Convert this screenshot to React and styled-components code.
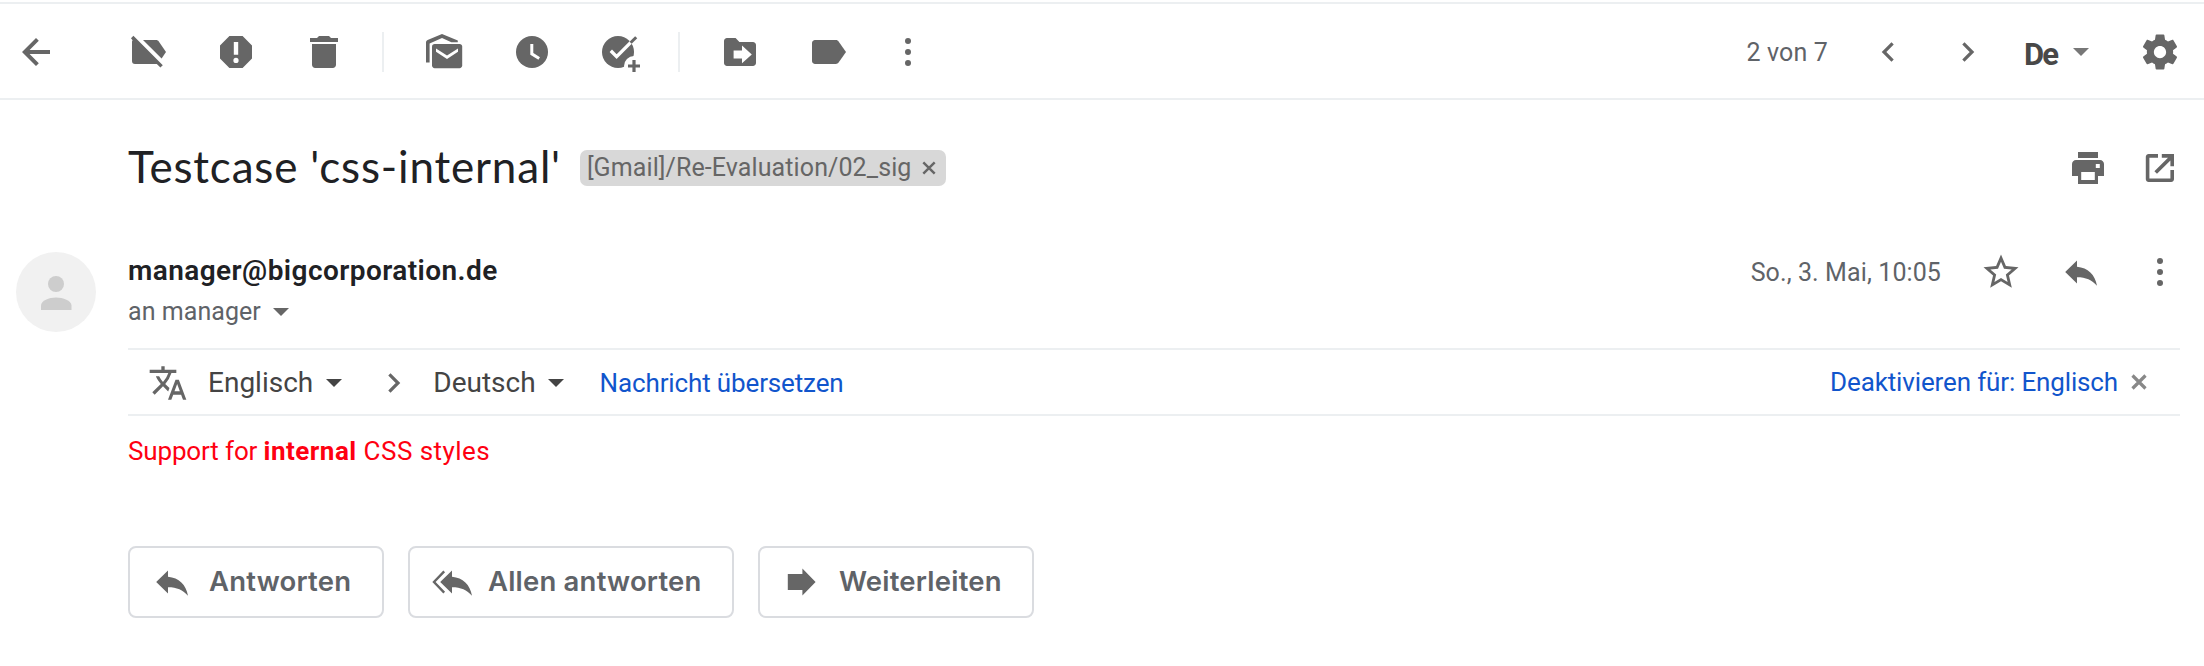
import React from "react";
import styled, { createGlobalStyle } from "styled-components";

const GlobalStyle = createGlobalStyle`
  * { box-sizing: border-box; }
  body {
    margin: 0;
    background: #fff;
    color: #202124;
    font-family: Roboto, "Liberation Sans", sans-serif;
  }
`;

const ICON = "#666";
const LINE = "#eceff1";

/* ---------- icons ---------- */

const Svg = styled.svg`
  display: block;
  flex: none;
  overflow: visible;
  width: ${(p) => p.$w || 40}px;
  height: ${(p) => p.$h || 40}px;
  fill: ${(p) => p.$color || ICON};
`;

const Icon = ({ children, box = "0 0 20 20", ...rest }) => (
  <Svg viewBox={box} aria-hidden="true" {...rest}>
    {children}
  </Svg>
);

const BackIcon = () => (
  <Icon><path d="M17 9H6.8l4.6-4.6L10 3l-7 7 7 7 1.4-1.4L6.8 11H17z" /></Icon>
);
const LabelOffIcon = () => (
  <Icon>
    <path d="M2.7 1.9 1.5 3.1l.8 1Q2 4.4 2 5v9.5A1.5 1.5 0 0 0 3.5 16h10.9l1.8 1.8 1.2-1.2z" />
    <path d="M7.5 4H14c.6 0 1.1.3 1.4.7L19 10l-2.2 3.3z" />
  </Icon>
);
const SpamIcon = () => (
  <Icon>
    <path fillRule="evenodd" d="M13.3 2H6.7L2 6.7v6.6L6.7 18h6.6l4.7-4.7V6.7zM8.9 5h2.2v6.4H8.9zM10 12.9a1.3 1.3 0 1 1 0 2.6 1.3 1.3 0 0 1 0-2.6z" />
  </Icon>
);
const TrashIcon = () => (
  <Icon>
    <path d="M13.5 3l-1-1h-5l-1 1H3v2h14V3zM4 6v10.4C4 17.3 4.7 18 5.6 18h8.8c.9 0 1.6-.7 1.6-1.6V6z" />
  </Icon>
);
const UnreadIcon = () => (
  <Icon>
    <path d="M1 15.200V5.300c0-.6.3-1.100.8-1.300L9 1l7.900 3.300v.8h-3.200L9 3 2.800 5.700V15.200z" />
    <path d="M5.300 6h12.500c.7 0 1.300.6 1.300 1.300v9.500c0 .7-.6 1.300-1.300 1.300H5.300c-.7 0-1.300-.6-1.300-1.300V7.300C4 6.600 4.600 6 5.300 6z" />
    <path d="M6 8.600v1.300l5.500 3.600L17 9.900V8.300l-5.500 3.400L6 8.300z" fill="#fff" />
  </Icon>
);
const SnoozeIcon = () => (
  <Icon>
    <circle cx="10" cy="10" r="8" />
    <path d="M9.900 6v4.900l3.700 2.300" fill="none" stroke="#fff" strokeWidth="1.500" />
  </Icon>
);
const AddTaskIcon = () => (
  <Icon>
    <circle cx="9" cy="10" r="8" />
    <circle cx="17" cy="17" r="5" fill="#fff" />
    <path d="M5.400 9.400l2.900 2.900 8.600-8.600" fill="none" stroke="#fff" strokeWidth="1.700" />
    <path d="M15.300 5.400l2.800-2.800" fill="none" stroke={ICON} strokeWidth="1.500" />
    <path d="M16.200 14h1.600v2.200H20v1.600h-2.200V20h-1.600v-2.200H14v-1.600h2.200z" />
  </Icon>
);
const MoveIcon = () => (
  <Icon>
    <path d="M3.500 3h4.300l1.900 2h6.800c.8 0 1.500.7 1.500 1.500v9c0 .8-.7 1.500-1.500 1.500h-13C2.700 17 2 16.300 2 15.500v-11C2 3.700 2.700 3 3.500 3z" />
    <path d="M6.800 9.200h4.200V6.800l4.900 4.400-4.900 4.400v-2.400H6.800z" fill="#fff" />
  </Icon>
);
const LabelIcon = () => (
  <Icon><path d="M3.500 4h10.400c.6 0 1.100.3 1.400.7L19 10l-3.700 5.300c-.3.4-.8.7-1.400.7H3.500C2.700 16 2 15.300 2 14.500v-9C2 4.700 2.700 4 3.500 4z" /></Icon>
);
const MoreIcon = () => (
  <Icon>
    <circle cx="10" cy="4.500" r="1.500" /><circle cx="10" cy="10" r="1.500" /><circle cx="10" cy="15.500" r="1.500" />
  </Icon>
);
const ChevronIcon = ({ left }) => (
  <Icon>
    <path d={left ? "M12.300 5.700 8 10l4.300 4.300" : "M7.700 5.700 12 10l-4.300 4.300"} fill="none" stroke={ICON} strokeWidth="1.600" />
  </Icon>
);
const GearIcon = () => (
  <Icon box="0 0 24 24" $w={42} $h={42}>
    <path d="M19.430 12.980c.04-.32.07-.64.07-.98s-.03-.66-.07-.98l2.110-1.650c.19-.15.24-.42.12-.64l-2-3.460c-.12-.22-.39-.3-.61-.22l-2.490 1c-.52-.4-1.080-.73-1.690-.98l-.38-2.650C14.460 2.180 14.250 2 14 2h-4c-.25 0-.46.18-.49.42l-.38 2.650c-.61.25-1.170.59-1.690.98l-2.490-1c-.23-.09-.49 0-.61.22l-2 3.460c-.13.22-.07.49.12.64l2.110 1.650c-.04.32-.07.65-.07.98s.03.66.07.98l-2.110 1.650c-.19.15-.24.42-.12.64l2 3.460c.12.22.39.3.61.22l2.490-1c.52.4 1.080.73 1.690.98l.38 2.650c.03.24.24.42.49.42h4c.25 0 .46-.18.49-.42l.38-2.650c.61-.25 1.170-.59 1.690-.98l2.490 1c.23.09.49 0 .61-.22l2-3.460c.12-.22.07-.49-.12-.64l-2.110-1.650zM12 15.500c-1.930 0-3.500-1.570-3.500-3.500s1.570-3.500 3.500-3.500 3.500 1.570 3.500 3.500-1.570 3.500-3.500 3.500z" />
  </Icon>
);
const PrintIcon = () => (
  <Icon>
    <path fillRule="evenodd" d="M5 2h10v3H5zM4 6h12c1.100 0 2 .9 2 2v6h-3v4H5v-4H2V8c0-1.100.9-2 2-2zm2.600 6v4h6.800v-4zM13.900 8v2h2V8z" />
  </Icon>
);
const PopOutIcon = () => (
  <Icon>
    <path d="M9 3v1.900H4.700v10.400h10.500V11H17v4.600c0 .8-.7 1.400-1.400 1.400H4.300c-.7 0-1.400-.6-1.400-1.400V4.400C2.900 3.600 3.600 3 4.300 3z" />
    <path d="M10.900 3H17v6.100h-1.800V6.200l-6.700 6.700-1.300-1.300 6.800-6.700h-3.100z" />
  </Icon>
);
const StarIcon = () => (
  <Icon box="0 0 24 24" $w={42} $h={42}>
    <path d="M22 9.240l-7.190-.62L12 2 9.190 8.630 2 9.240l5.460 4.730L5.820 21 12 17.270 18.180 21l-1.630-7.030L22 9.240zM12 15.400l-3.760 2.270 1-4.280-3.320-2.880 4.380-.38L12 6.100l1.710 4.040 4.380.38-3.320 2.880 1 4.280L12 15.400z" />
  </Icon>
);
const REPLY = "M8 4.200v3.200c5.500.5 9 3.900 10 9.500-2.600-3-5.500-4.300-10-4.300v3.200L2.100 10z";
const ReplyIcon = () => <Icon><path d={REPLY} /></Icon>;
const ReplyAllIcon = () => (
  <Icon box="-2 0 22 20" $w={44}>
    <path d={REPLY} />
    <path d="M4.100 4.700-1 10l5.100 5.300" fill="none" stroke={ICON} strokeWidth="1.200" />
  </Icon>
);
const ForwardIcon = () => (
  <Icon><path d="M2.900 6h7.300V3.200l6.600 6.800-6.600 6.800V14H2.900z" /></Icon>
);
const TranslateIcon = () => (
  <Icon box="0 0 24 24">
    <path d="M12.870 15.070l-2.540-2.510.03-.03A17.520 17.520 0 0 0 14.070 6H17V4h-7V2H8v2H1v2h11.170C11.500 7.920 10.440 9.750 9 11.350 8.070 10.320 7.300 9.190 6.690 8h-2c.73 1.630 1.730 3.170 2.980 4.560l-5.090 5.020L4 19l5-5 3.110 3.110.76-2.040zM18.500 10h-2L12 22h2l1.120-3h4.750L21 22h2l-4.500-12zm-2.620 7l1.620-4.330L19.120 17h-3.240z" />
  </Icon>
);
const Cross = ({ size, weight, color }) => (
  <Icon box="0 0 16 16" $w={size} $h={size}>
    <path d="M1.500 1.500l13 13M14.500 1.500l-13 13" fill="none" stroke={color} strokeWidth={weight} />
  </Icon>
);
const PersonIcon = () => (
  <Icon box="0 0 80 80" $w={80} $h={80} $color="#cdcdcd">
    <circle cx="40" cy="32" r="8" />
    <path d="M25 58v-4.500C25 48.500 33 45.500 40 45.500s15.500 3 15.500 8V58z" />
  </Icon>
);

const Caret = styled.span`
  flex: none;
  border: solid transparent;
  border-width: 8px 8px 0;
  border-top-color: ${(p) => p.$color || ICON};
`;

/* ---------- layout ---------- */

const Page = styled.main`
  width: 2204px;
  height: 666px;
  padding-top: 2px;
  overflow: hidden;
`;

const Toolbar = styled.header`
  display: flex;
  align-items: center;
  justify-content: space-between;
  height: 98px;
  padding: 2px 23px 0 16px;
  border-top: 2px solid ${LINE};
  border-bottom: 2px solid ${LINE};
`;

const ToolGroup = styled.div`
  display: flex;
  align-items: center;
`;

const ToolButton = styled.span`
  display: flex;
  align-items: center;
  justify-content: center;
  width: ${(p) => p.$width || 88}px;
  height: 40px;
  margin-left: ${(p) => p.$lead || 0}px;
`;

const Divider = styled.span`
  width: 2px;
  height: 40px;
  margin: 0 16px 0 14px;
  background: ${LINE};
`;

const Counter = styled.span`
  margin-right: 20px;
  font-size: 25px;
  letter-spacing: 0.15px;
  color: #5f6368;
`;

const InputTool = styled.span`
  display: flex;
  align-items: center;
  gap: 16px;
  width: 131px;
  padding-left: 16px;
`;

const InputToolName = styled.span`
  padding-top: 6px;
  font-size: 31px;
  line-height: 36px;
  font-weight: 700;
  letter-spacing: -2px;
  color: #484848;
`;

const SubjectRow = styled.section`
  display: flex;
  align-items: center;
  height: 136px;
  padding: 0 24px 0 128px;
`;

const Subject = styled.h1`
  margin: 0 19px 4px 0;
  font: 400 44px/52px Lato, "Open Sans", sans-serif;
  letter-spacing: 0.82px;
  white-space: nowrap;
`;

const LabelChip = styled.span`
  display: flex;
  align-items: center;
  gap: 11px;
  height: 36px;
  padding: 0 10px 0 7px;
  border-radius: 7px;
  background: #d8d8d8;
  color: #666;
  font-size: 25px;
  line-height: 34px;
  letter-spacing: 0.1px;
`;

const TrailingIcons = styled.div`
  display: flex;
  gap: 32px;
  margin-left: auto;
`;

const SenderRow = styled.section`
  display: flex;
  height: 112px;
  padding: 16px 24px 0 16px;
`;

const Avatar = styled.div`
  width: 80px;
  height: 80px;
  margin-right: 32px;
  border-radius: 50%;
  background: #f1f1f1;
`;

const SenderAddress = styled.div`
  padding-top: 1px;
  font-size: 28px;
  line-height: 36px;
  font-weight: 600;
  letter-spacing: 0.43px;
`;

const Recipient = styled.div`
  display: flex;
  align-items: center;
  gap: 12px;
  margin-top: 7px;
  font-size: 25px;
  line-height: 32px;
  letter-spacing: 0.05px;
  color: #5f6368;
`;

const SenderActions = styled.div`
  display: flex;
  align-items: center;
  height: 40px;
  margin-left: auto;
  gap: 39px;
`;

const DateText = styled.span`
  font-size: 25px;
  letter-spacing: 0.1px;
  color: #5f6368;
`;

const Body = styled.section`
  width: 2052px;
  margin-left: 128px;
`;

const TranslateBar = styled.div`
  display: flex;
  align-items: center;
  height: 68px;
  padding: 2px 33px 0 20px;
  border-top: 2px solid ${LINE};
  border-bottom: 2px solid ${LINE};
`;

const Language = styled.span`
  display: flex;
  align-items: center;
  gap: ${(p) => p.$gap}px;
  margin-left: ${(p) => p.$lead}px;
  font-size: 28px;
  line-height: 36px;
  color: #444;
`;

const Link = styled.a`
  font-size: 26px;
  line-height: 32px;
  letter-spacing: -0.14px;
  color: #15c;
  white-space: nowrap;
`;

const TranslateLink = styled(Link)`
  margin-left: 36px;
`;

const DisableGroup = styled.span`
  display: flex;
  align-items: center;
  gap: 13px;
  margin-left: auto;
  padding-bottom: 2px;
`;

const Message = styled.p`
  margin: 19px 0 0;
  font-size: 26px;
  line-height: 32px;
  letter-spacing: -0.15px;
  color: #f01;
  white-space: pre;

  b { letter-spacing: 0.5px; }
  b + span { letter-spacing: 0.45px; }
`;

const ReplyBar = styled.div`
  display: flex;
  gap: 24px;
  margin-top: 79px;
`;

const ReplyButton = styled.button`
  display: flex;
  align-items: center;
  gap: ${(p) => p.$gap}px;
  width: ${(p) => p.$width}px;
  height: 72px;
  padding: 0 0 0 22px;
  border: 2px solid #dadce0;
  border-radius: 8px;
  background: #fff;
  color: #5f6368;
  font: 600 27.500px/34px Inter, "Open Sans", sans-serif;
  letter-spacing: 0.2px;
  white-space: nowrap;

  span { padding-bottom: 3px; }
`;

export default function App() {
  return (
    <Page>
      <GlobalStyle />
      <Toolbar>
        <ToolGroup>
          <ToolButton $width={40}><BackIcon /></ToolButton>
          <ToolButton $lead={48}><LabelOffIcon /></ToolButton>
          <ToolButton><SpamIcon /></ToolButton>
          <ToolButton><TrashIcon /></ToolButton>
          <Divider />
          <ToolButton><UnreadIcon /></ToolButton>
          <ToolButton><SnoozeIcon /></ToolButton>
          <ToolButton><AddTaskIcon /></ToolButton>
          <Divider />
          <ToolButton><MoveIcon /></ToolButton>
          <ToolButton><LabelIcon /></ToolButton>
          <ToolButton $width={72}><MoreIcon /></ToolButton>
        </ToolGroup>
        <ToolGroup>
          <Counter>2 von 7</Counter>
          <ToolButton $width={80}><ChevronIcon left /></ToolButton>
          <ToolButton $width={80}><ChevronIcon /></ToolButton>
          <InputTool>
            <InputToolName>De</InputToolName>
            <Caret $color="#777" />
          </InputTool>
          <GearIcon />
        </ToolGroup>
      </Toolbar>

      <SubjectRow>
        <Subject>Testcase 'css-internal'</Subject>
        <LabelChip>
          [Gmail]/Re-Evaluation/02_sig
          <Cross size={14} weight={2.800} color="#666" />
        </LabelChip>
        <TrailingIcons>
          <PrintIcon />
          <PopOutIcon />
        </TrailingIcons>
      </SubjectRow>

      <SenderRow>
        <Avatar><PersonIcon /></Avatar>
        <div>
          <SenderAddress>manager@bigcorporation.de</SenderAddress>
          <Recipient>an manager <Caret /></Recipient>
        </div>
        <SenderActions>
          <DateText>So., 3. Mai, 10:05</DateText>
          <StarIcon />
          <ReplyIcon />
          <MoreIcon />
        </SenderActions>
      </SenderRow>

      <Body>
        <TranslateBar>
          <TranslateIcon />
          <Language $lead={20} $gap={13}>Englisch <Caret $color="#444" /></Language>
          <ToolButton $width={40} $lead={32}><ChevronIcon /></ToolButton>
          <Language $lead={19} $gap={12}>Deutsch <Caret $color="#444" /></Language>
          <TranslateLink>Nachricht übersetzen</TranslateLink>
          <DisableGroup>
            <Link>Deaktivieren für: Englisch</Link>
            <Cross size={16} weight={3.200} color="#888" />
          </DisableGroup>
        </TranslateBar>
        <Message>Support for <b>internal</b><span> CSS styles</span></Message>
        <ReplyBar>
          <ReplyButton $width={256} $gap={17}><ReplyIcon /><span>Antworten</span></ReplyButton>
          <ReplyButton $width={326} $gap={12}><ReplyAllIcon /><span>Allen antworten</span></ReplyButton>
          <ReplyButton $width={276} $gap={17}><ForwardIcon /><span>Weiterleiten</span></ReplyButton>
        </ReplyBar>
      </Body>
    </Page>
  );
}
